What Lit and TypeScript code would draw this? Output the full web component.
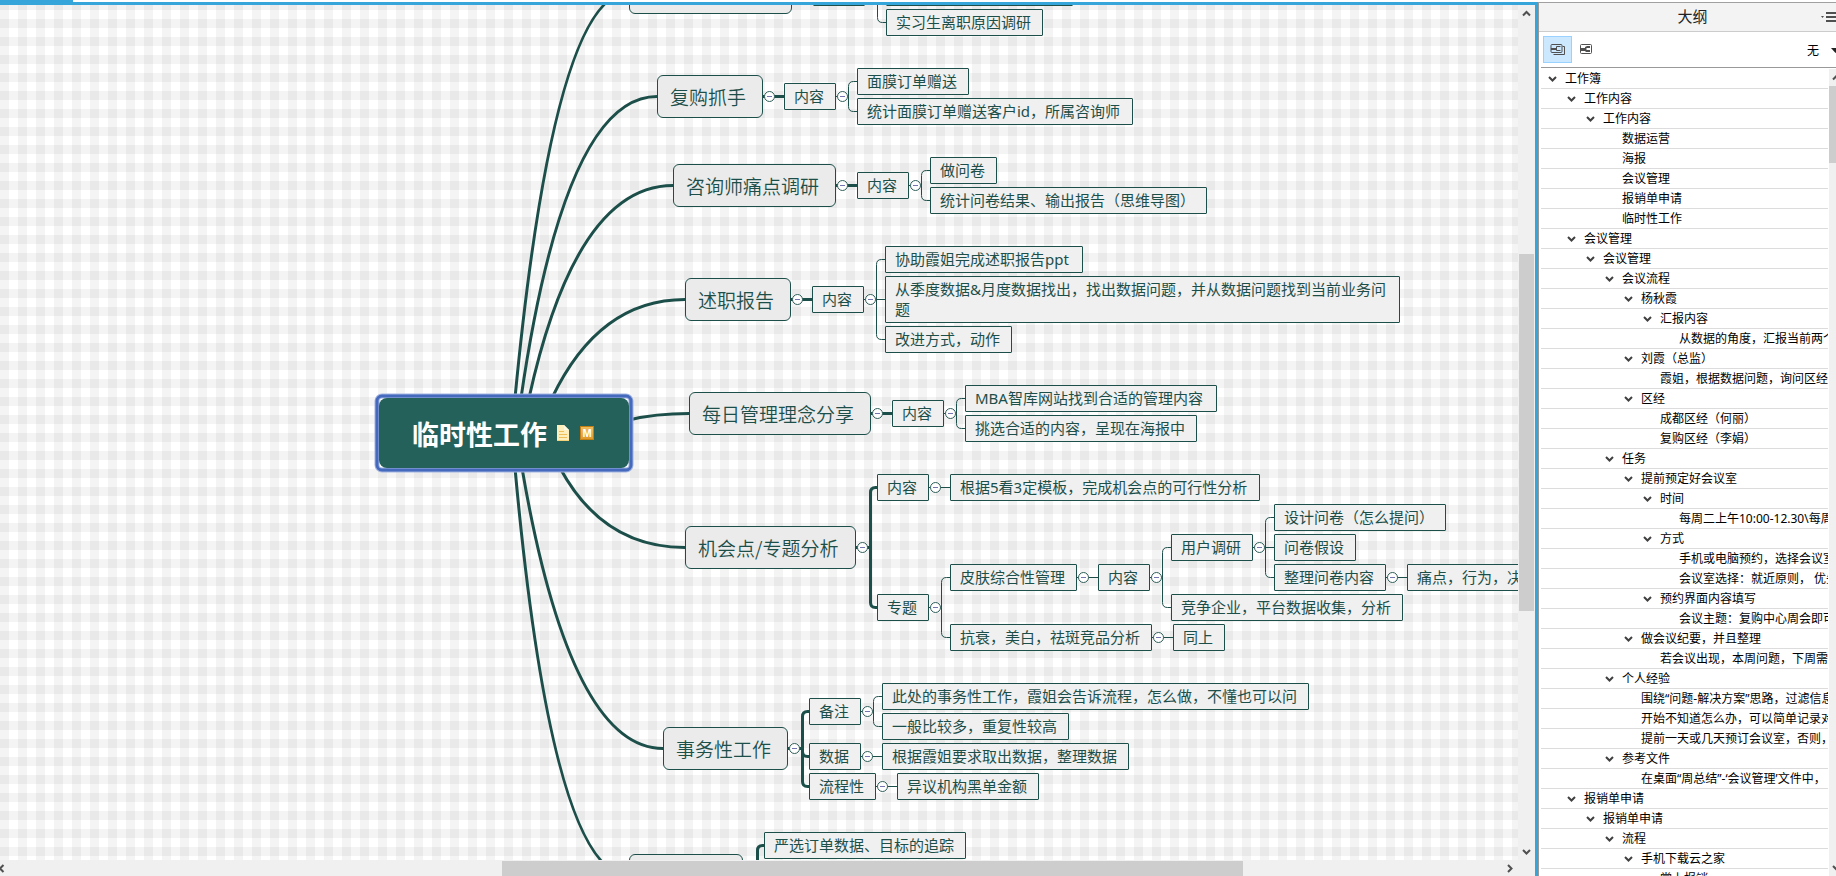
import { LitElement, html, svg, css } from "lit";
import { customElement, property } from "lit/decorators.js";
import { styleMap } from "lit/directives/style-map.js";
import { classMap } from "lit/directives/class-map.js";

interface Topic {
  t: string;
  x: number;
  y: number;
  w: number;
  h?: number;
  kids?: Topic[];
}

interface Branch extends Topic {
  /** Start of the curve on the root topic and the x of its control point. */
  from: [number, number];
  bend: number;
}

const MAIN_H = 43;
const LEAF_H = 27;

const branches: Branch[] = [
  {
    t: "", x: 629, y: -29, w: 163, from: [515, 398], bend: 554,
    kids: [{
      t: "", x: 813, y: -21, w: 52, kids: [
        { t: "", x: 886, y: -21, w: 187 },
        { t: "实习生离职原因调研", x: 886, y: 9, w: 157 },
      ],
    }],
  },
  {
    t: "复购抓手", x: 657, y: 75, w: 106, from: [521, 398], bend: 565,
    kids: [{
      t: "内容", x: 784, y: 83, w: 52, kids: [
        { t: "面膜订单赠送", x: 857, y: 68, w: 112 },
        { t: "统计面膜订单赠送客户id，所属咨询师", x: 857, y: 98, w: 276 },
      ],
    }],
  },
  {
    t: "咨询师痛点调研", x: 673, y: 164, w: 163, from: [529, 398], bend: 576,
    kids: [{
      t: "内容", x: 857, y: 172, w: 52, kids: [
        { t: "做问卷", x: 930, y: 157, w: 67 },
        { t: "统计问卷结果、输出报告（思维导图）", x: 930, y: 187, w: 277 },
      ],
    }],
  },
  {
    t: "述职报告", x: 685, y: 278, w: 106, from: [552, 398], bend: 599,
    kids: [{
      t: "内容", x: 812, y: 286, w: 52, kids: [
        { t: "协助霞姐完成述职报告ppt", x: 885, y: 246, w: 198 },
        { t: "从季度数据&月度数据找出，找出数据问题，并从数据问题找到当前业务问题", x: 885, y: 276, w: 515, h: 47 },
        { t: "改进方式，动作", x: 885, y: 326, w: 127 },
      ],
    }],
  },
  {
    t: "每日管理理念分享", x: 689, y: 392, w: 182, from: [629, 420], bend: 655,
    kids: [{
      t: "内容", x: 892, y: 400, w: 52, kids: [
        { t: "MBA智库网站找到合适的管理内容", x: 965, y: 385, w: 252 },
        { t: "挑选合适的内容，呈现在海报中", x: 965, y: 415, w: 232 },
      ],
    }],
  },
  {
    t: "机会点/专题分析", x: 685, y: 526, w: 171, from: [560, 468], bend: 603,
    kids: [
      {
        t: "内容", x: 877, y: 474, w: 52, kids: [
          { t: "根据5看3定模板，完成机会点的可行性分析", x: 950, y: 474, w: 310 },
        ],
      },
      {
        t: "专题", x: 877, y: 594, w: 52, kids: [
          {
            t: "皮肤综合性管理", x: 950, y: 564, w: 127, kids: [{
              t: "内容", x: 1098, y: 564, w: 52, kids: [
                {
                  t: "用户调研", x: 1171, y: 534, w: 82, kids: [
                    { t: "设计问卷（怎么提问）", x: 1274, y: 504, w: 172 },
                    { t: "问卷假设", x: 1274, y: 534, w: 82 },
                    {
                      t: "整理问卷内容", x: 1274, y: 564, w: 112, kids: [
                        { t: "痛点，行为，决策", x: 1407, y: 564, w: 142 },
                      ],
                    },
                  ],
                },
                { t: "竞争企业，平台数据收集，分析", x: 1171, y: 594, w: 232 },
              ],
            }],
          },
          {
            t: "抗衰，美白，祛斑竞品分析", x: 950, y: 624, w: 202, kids: [
              { t: "同上", x: 1173, y: 624, w: 52 },
            ],
          },
        ],
      },
    ],
  },
  {
    t: "事务性工作", x: 663, y: 727, w: 125, from: [522, 468], bend: 570,
    kids: [
      {
        t: "备注", x: 809, y: 698, w: 52, kids: [
          { t: "此处的事务性工作，霞姐会告诉流程，怎么做，不懂也可以问", x: 882, y: 683, w: 427 },
          { t: "一般比较多，重复性较高", x: 882, y: 713, w: 187 },
        ],
      },
      {
        t: "数据", x: 809, y: 743, w: 52, kids: [
          { t: "根据霞姐要求取出数据，整理数据", x: 882, y: 743, w: 247 },
        ],
      },
      {
        t: "流程性", x: 809, y: 773, w: 67, kids: [
          { t: "异议机构黑单金额", x: 897, y: 773, w: 142 },
        ],
      },
    ],
  },
  {
    t: "", x: 629, y: 854, w: 114, from: [515, 468], bend: 552,
    kids: [
      { t: "严选订单数据、目标的追踪", x: 764, y: 832, w: 202 },
      { t: "", x: 764, y: 892, w: 202 },
    ],
  },
];

/** [level, text, has children] */
const outline: [number, string, boolean][] = [
  [0, "工作簿", true],
  [1, "工作内容", true],
  [2, "工作内容", true],
  [3, "数据运营", false],
  [3, "海报", false],
  [3, "会议管理", false],
  [3, "报销单申请", false],
  [3, "临时性工作", false],
  [1, "会议管理", true],
  [2, "会议管理", true],
  [3, "会议流程", true],
  [4, "杨秋霞", true],
  [5, "汇报内容", true],
  [6, "从数据的角度，汇报当前两个", false],
  [4, "刘霞（总监）", true],
  [5, "霞姐，根据数据问题，询问区经", false],
  [4, "区经", true],
  [5, "成都区经（何丽）", false],
  [5, "复购区经（李娟）", false],
  [3, "任务", true],
  [4, "提前预定好会议室", true],
  [5, "时间", true],
  [6, "每周二上午10:00-12.30\\每周", false],
  [5, "方式", true],
  [6, "手机或电脑预约，选择会议室", false],
  [6, "会议室选择：就近原则， 优先", false],
  [5, "预约界面内容填写", true],
  [6, "会议主题：复购中心周会即可", false],
  [4, "做会议纪要，并且整理", true],
  [5, "若会议出现，本周问题，下周需要", false],
  [3, "个人经验", true],
  [4, "围绕“问题-解决方案”思路，过滤信息", false],
  [4, "开始不知道怎么办，可以简单记录对", false],
  [4, "提前一天或几天预订会议室，否则，", false],
  [3, "参考文件", true],
  [4, "在桌面“周总结”-‘会议管理’文件中，", false],
  [1, "报销单申请", true],
  [2, "报销单申请", true],
  [3, "流程", true],
  [4, "手机下载云之家", true],
  [5, "掌上报销", false],
];

const fontStack = css`"Noto Sans", "Noto Sans CJK SC", sans-serif`;

@customElement("mind-map")
class MindMap extends LitElement {
  static styles = css`
    :host {
      display: block;
      position: relative;
      overflow: hidden;
      font-family: ${fontStack};
      color: #1d4f4a;
      background-color: #fff;
      background-image:
        repeating-linear-gradient(90deg, rgba(0, 0, 0, 0.042) 0 9px, transparent 9px 18px),
        repeating-linear-gradient(180deg, rgba(0, 0, 0, 0.042) 0 9px, transparent 9px 18px);
      background-position: 0 0, 0 -4px;
      background-size: 18px 18px;
    }
    .stage {
      position: absolute;
      inset: -5px 0 0 0;
    }
    .links {
      position: absolute;
      inset: 0;
      width: 100%;
      height: 100%;
      fill: none;
      stroke: #1d4f4a;
    }
    .thick { stroke-width: 3; }
    .thin { stroke-width: 1; }
    .topic {
      position: absolute;
      box-sizing: border-box;
      border: 1px solid #1d4f4a;
      border-radius: 1px;
      background: #f0f0f0;
      padding: 2px 9px 3px;
      font-size: 15px;
      line-height: 20px;
      white-space: nowrap;
    }
    .topic.wrap {
      white-space: normal;
      line-break: anywhere;
    }
    .topic.main {
      border-radius: 6px;
      background: #ebebeb;
      padding: 0 12px;
      font-family: "Noto Sans CJK SC", sans-serif;
      font-size: 19px;
      font-weight: 350;
      line-height: 41px;
    }
    .fold {
      position: absolute;
      width: 11px;
      height: 11px;
      padding: 0;
      border: 1px solid #2f5f5a;
      border-radius: 50%;
      background: #fff;
      display: grid;
      place-items: center;
    }
    .fold::before {
      content: "";
      width: 5px;
      height: 1px;
      background: #7474b0;
    }
    .root {
      position: absolute;
      left: 379px;
      top: 398px;
      box-sizing: border-box;
      width: 250px;
      height: 70px;
      margin: 0;
      border-radius: 8px;
      background: #24615b;
      color: #fff;
      display: flex;
      align-items: center;
      padding-left: 33px;
      font-size: 27px;
      font-weight: 700;
      line-height: 40px;
    }
    .name { padding-top: 4px; }
    .halo {
      position: absolute;
      left: 374px;
      top: 393px;
      width: 260px;
      height: 80px;
    }
    .note {
      width: 12px;
      height: 16px;
      margin-left: 10px;
    }
    .mark {
      box-sizing: border-box;
      width: 14px;
      height: 14px;
      margin-left: 11px;
      border: 1px solid #c47f14;
      background: linear-gradient(#f0bd5e, #e09a2c);
      font-family: "Liberation Sans", sans-serif;
      font-size: 11px;
      line-height: 12px;
      text-align: center;
    }
  `;

  private mid(n: Topic, main = false) {
    return n.y + (n.h ?? (main ? MAIN_H : LEAF_H)) / 2;
  }

  private links(n: Topic, main: boolean): unknown {
    if (!n.kids) return null;
    const y = this.mid(n, main);
    const cls = main ? "thick" : "thin";
    return n.kids.map((k) => {
      const ky = this.mid(k);
      const vx = k.x - (main ? 6.5 : 8.5);
      const r = Math.sign(ky - y) * 5;
      const d = ky === y
        ? `M${n.x + n.w} ${y}H${k.x}`
        : `M${n.x + n.w} ${y}H${vx}V${ky - r}Q${vx} ${ky} ${vx + 5} ${ky}H${k.x}`;
      return svg`<path class=${cls} d=${d}></path>${this.links(k, false)}`;
    });
  }

  private topic(n: Topic, main: boolean): unknown {
    const h = n.h ?? (main ? MAIN_H : LEAF_H);
    return html`
      <div class=${classMap({ topic: true, main, wrap: !!n.h })}
        style=${styleMap({ left: `${n.x}px`, top: `${n.y}px`, width: `${n.w}px`, height: `${h}px` })}>${n.t}</div>
      ${n.kids
        ? html`<button class="fold" aria-label="折叠"
            style=${styleMap({ left: `${n.x + n.w + 1}px`, top: `${n.y + (h - 11) / 2}px` })}></button>
            ${n.kids.map((k) => this.topic(k, false))}`
        : null}
    `;
  }

  render() {
    return html`
      <div class="stage">
        <svg class="links" aria-hidden="true">
          ${branches.map((b) => {
            const y = this.mid(b, true);
            return svg`<path class="thick" d="M${b.from[0]} ${b.from[1]}Q${b.bend} ${y} ${b.x} ${y}"></path>${this.links(b, true)}`;
          })}
        </svg>
        ${branches.map((b) => this.topic(b, true))}
        <svg class="halo" viewBox="0 0 260 80" aria-hidden="true">
          <rect x="4" y="4" width="252" height="72" rx="5" fill="#fff"></rect>
          <rect x="3" y="3" width="254" height="74" rx="5" fill="none" stroke="#a2b4e0" stroke-width="5"></rect>
          <rect x="3" y="3" width="254" height="74" rx="5" fill="none" stroke="#4469bd" stroke-width="3"></rect>
        </svg>
        <h1 class="root">
          <span class="name">临时性工作</span>
          <svg class="note" viewBox="0 0 12 16" aria-label="备注">
            <path d="M0 0H7L12 5V16H0Z" fill="#fdeebb"></path>
            <path d="M7 0V5H12Z" fill="#fff8e0"></path>
            <path d="M2 6.5H7M2 9.5H10M2 12.5H10" stroke="#eebf57" stroke-width="1.2"></path>
            <path d="M0 15.500H12" stroke="#f3d27c"></path>
          </svg>
          <span class="mark">M</span>
        </h1>
      </div>
    `;
  }
}

@customElement("scroll-bar")
class ScrollBar extends LitElement {
  /** Direction and the lengths (in percent) before and of the thumb. */
  @property() dir = "v";
  @property({ type: Number }) start = 0;
  @property({ type: Number }) size = 10;

  static styles = css`
    :host { display: block; background: #f0f0f0; }
    .bar { display: flex; height: 100%; align-items: center; }
    .v { flex-direction: column; }
    .arrow {
      flex: none;
      width: 15px;
      height: 17px;
      padding: 0;
      border: 0;
      background: none;
      display: grid;
      place-items: center;
    }
    .h .arrow { width: 17px; height: 15px; }
    .arrow svg { width: 9px; height: 9px; fill: none; stroke: #505050; stroke-width: 2; }
    .track { flex: 1; align-self: stretch; display: flex; min-width: 0; min-height: 0; }
    .v .track { flex-direction: column; }
    .gap { flex: none; }
    .thumb { flex: none; background: #cdcdcd; }
  `;

  render() {
    const v = this.dir === "v";
    const side = v ? "height" : "width";
    return html`
      <div class="bar ${v ? "v" : "h"}">
        <button class="arrow" aria-label="后退"><svg viewBox="0 0 9 9"><path d=${v ? "M1 6.5 4.5 3 8 6.5" : "M6.5 1 3 4.5 6.5 8"}></path></svg></button>
        <div class="track">
          <div class="gap" style=${styleMap({ [side]: `${this.start}%` })}></div>
          <div class="thumb" style=${styleMap({ [side]: `${this.size}%` })}></div>
        </div>
        <button class="arrow" aria-label="前进"><svg viewBox="0 0 9 9"><path d=${v ? "M1 3 4.5 6.5 8 3" : "M3 1 6.5 4.5 3 8"}></path></svg></button>
      </div>
    `;
  }
}

@customElement("outline-panel")
class OutlinePanel extends LitElement {
  static styles = css`
    :host {
      display: block;
      overflow: hidden;
      border-top: 1px solid #a0a0a0;
      border-left: 1px solid #999;
      background: #fff;
      color: #000;
      font-family: ${fontStack};
    }
    .panel {
      width: 307px;
      height: 100%;
      display: flex;
      flex-direction: column;
    }
    .head {
      flex: none;
      position: relative;
      height: 28px;
      border-bottom: 1px solid #ccc;
      background: #f3f3f3;
    }
    .title {
      margin: 0;
      text-align: center;
      font-size: 15px;
      font-weight: 400;
      line-height: 27px;
      color: #222;
    }
    .menu {
      position: absolute;
      left: 282px;
      top: 6px;
      width: 20px;
      height: 16px;
      padding: 0;
      border: 0;
      background: none;
    }
    .menu svg { display: block; width: 20px; height: 16px; fill: #505050; }
    .tools {
      flex: none;
      box-sizing: border-box;
      height: 36px;
      display: flex;
      align-items: center;
      margin-left: 2px;
      padding: 0 0 1px 2px;
      border-bottom: 1px solid #999;
    }
    .tool {
      box-sizing: border-box;
      width: 29px;
      height: 27px;
      padding: 0;
      border: 1px solid transparent;
      background: none;
      display: grid;
      place-items: center;
    }
    .tool.on { border-color: #99d1ff; background: #cce8ff; }
    .tool svg { width: 15px; height: 11px; fill: none; stroke: #505050; }
    .tool .solid { fill: #505050; stroke: none; }
    .filter {
      margin-left: auto;
      width: 39px;
      height: 24px;
      display: flex;
      align-items: center;
      position: relative;
    }
    .filter select {
      appearance: none;
      width: 39px;
      border: 0;
      padding: 4px 0 0;
      background: none;
      font: 12px/18px ${fontStack};
      color: #000;
    }
    .filter svg {
      position: absolute;
      left: 24px;
      top: 11px;
      width: 9px;
      height: 5px;
      fill: #222;
      pointer-events: none;
    }
    .body {
      flex: 1;
      min-height: 0;
      display: flex;
      padding-top: 1px;
    }
    .tree {
      width: 287px;
      margin: 0 1px 0 2px;
      padding: 0;
      overflow: hidden;
      list-style: none;
    }
    .row {
      box-sizing: border-box;
      height: 20px;
      display: flex;
      align-items: center;
      border-bottom: 1px solid #dcdcdc;
      font-size: 12px;
      line-height: 19px;
      white-space: nowrap;
    }
    .toggle {
      flex: none;
      width: 24px;
      height: 19px;
      padding: 0 0 0 7px;
      border: 0;
      background: none;
      display: flex;
      align-items: center;
    }
    .toggle svg { width: 9px; height: 6px; fill: none; stroke: #404040; stroke-width: 2; }
    .blank { flex: none; width: 24px; }
    .scroll { width: 15px; }
  `;

  render() {
    return html`
      <div class="panel">
        <div class="head">
          <h2 class="title">大纲</h2>
          <button class="menu" aria-label="菜单">
            <svg viewBox="0 0 20 16"><path d="M0 7H3L1.500 9ZM5 3H18V5H5ZM5 7H18V9H5ZM5 11H18V13H5Z"></path></svg>
          </button>
        </div>
        <div class="tools">
          <button class="tool on" aria-label="工作簿">
            <svg viewBox="0 0 15 11">
              <rect x="1" y=".5" width="11" height="8" rx="1"></rect>
              <path d="M3.500 10.500H14.500V2.500H12.500"></path>
              <path class="solid" d="M1 4H6V6H1Z"></path>
              <path d="M10.500 2.500H6.500V6.500H10.500"></path>
            </svg>
          </button>
          <button class="tool" aria-label="画布">
            <svg viewBox="0 0 15 11">
              <rect x="1.500" y=".5" width="11" height="9" rx="1"></rect>
              <path class="solid" d="M2 4H6V3L8 2H11V4H8L7 5 8 6H11V8H7L6 7H2Z"></path>
            </svg>
          </button>
          <label class="filter">
            <select aria-label="筛选"><option>无</option></select>
            <svg viewBox="0 0 9 5"><path d="M0 0H9L4.500 5Z"></path></svg>
          </label>
        </div>
        <div class="body">
          <ul class="tree">
            ${outline.map(([level, text, open]) => html`
              <li class="row" style=${styleMap({ paddingLeft: `${level * 19}px` })}>
                ${open
                  ? html`<button class="toggle" aria-label="展开"><svg viewBox="0 0 9 6"><path d="M1 1 4.500 4.500 8 1"></path></svg></button>`
                  : html`<span class="blank"></span>`}
                <span>${text}</span>
              </li>`)}
          </ul>
          <scroll-bar class="scroll" dir="v" start="0" size="10"></scroll-bar>
        </div>
      </div>
    `;
  }
}

@customElement("app-root")
class AppRoot extends LitElement {
  static styles = css`
    :host {
      display: flex;
      flex-direction: column;
      height: 100vh;
      overflow: hidden;
      background: #fff;
    }
    .strip { flex: none; height: 2px; }
    .tab { width: 73px; height: 2px; background: #35a5da; }
    .main { flex: 1; min-height: 0; display: flex; }
    .work {
      flex: 1;
      min-width: 0;
      box-sizing: border-box;
      border-top: 3px solid #35a5da;
      border-right: 3px solid #35a5da;
      background: #f0f0f0;
      display: grid;
      grid-template: minmax(0, 1fr) 15px / minmax(0, 1fr) 15px;
      gap: 1px;
      padding-right: 1px;
    }
    .pan { margin-left: -7px; }
    .side { flex: none; width: 297px; }
  `;

  render() {
    return html`
      <div class="strip"><div class="tab"></div></div>
      <div class="main">
        <div class="work">
          <mind-map></mind-map>
          <scroll-bar dir="v" start="28.3" size="43.4"></scroll-bar>
          <scroll-bar class="pan" dir="h" start="33" size="49.7"></scroll-bar>
        </div>
        <outline-panel class="side"></outline-panel>
      </div>
    `;
  }
}
